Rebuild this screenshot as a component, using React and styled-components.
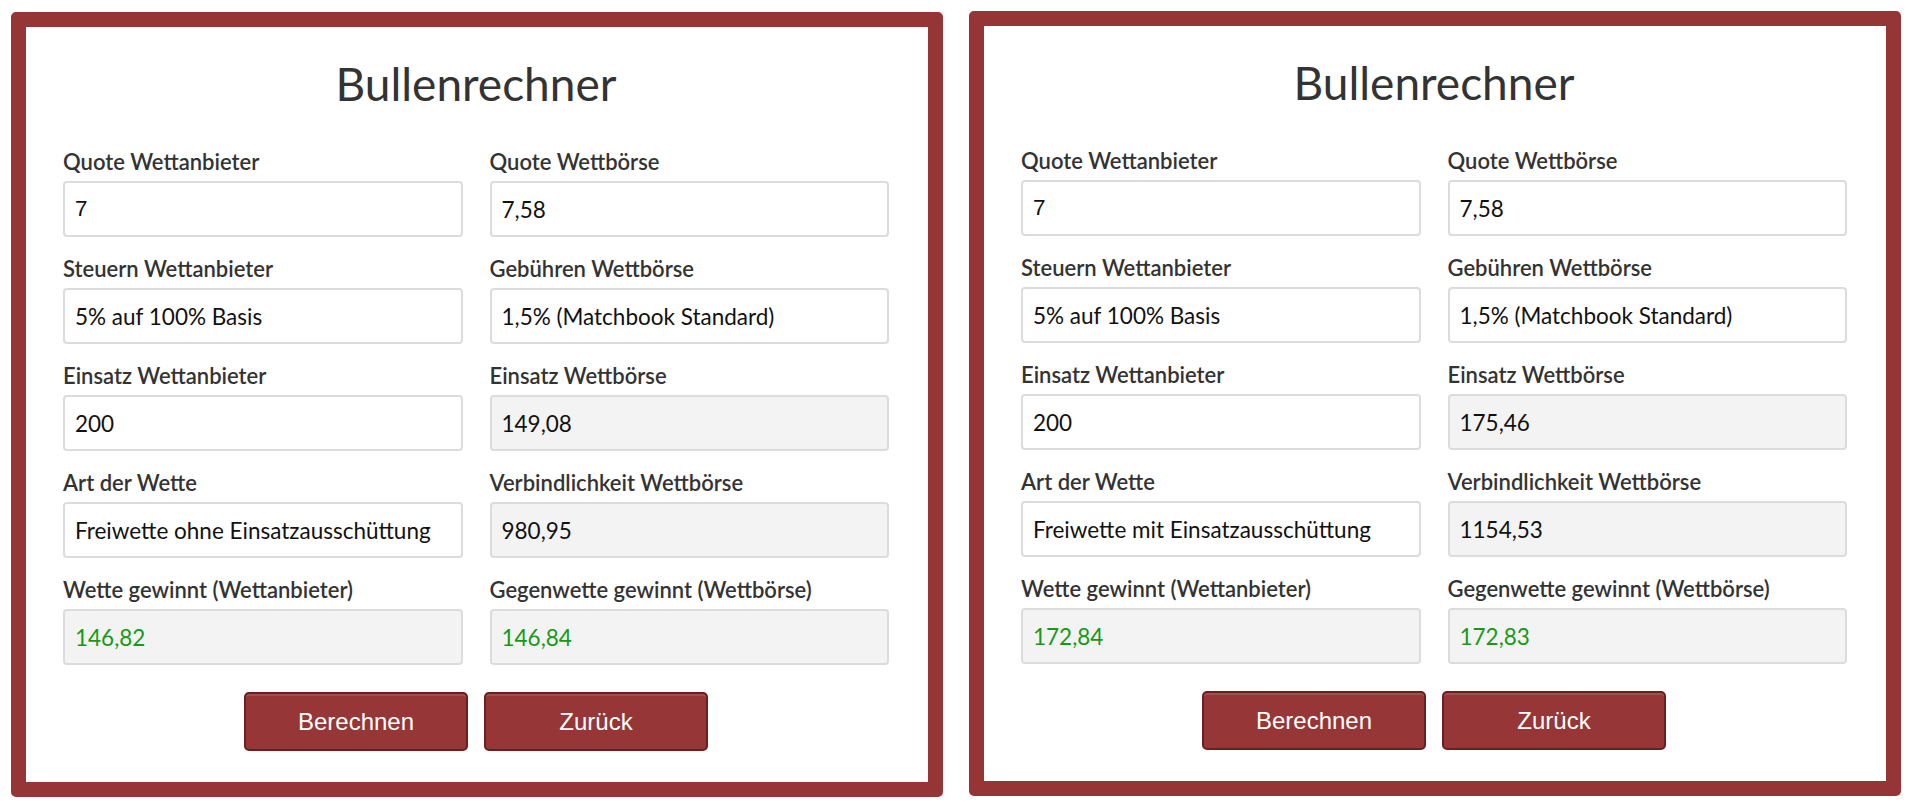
import React from 'react';
import styled, {createGlobalStyle} from 'styled-components';

const GlobalStyle = createGlobalStyle`
  html, body {
    margin: 0;
    padding: 0;
    background: #fff;
  }
  body {
    font-family: "Lato", "Noto Sans", sans-serif;
  }
`;

const Page = styled.div`
  display: flex;
  flex-direction: row;
  align-items: flex-start;
  gap: 26px;
  padding: 11px 13px 0 11px;
`;

const Card = styled.div`
  box-sizing: border-box;
  width: 932px;
  margin-top: ${p => p.$offset || 0}px;
  border: 15px solid #953535;
  border-radius: 5px;
  background: #fff;
  padding: 32px 39px 31px 37px;
  display: flex;
  flex-direction: column;
`;

const Title = styled.h1`
  margin: 0 0 38px 0;
  font-family: "Lato", sans-serif;
  font-weight: 400;
  font-size: 46px;
  line-height: 50px;
  color: #333;
  text-align: center;
`;

const FieldGrid = styled.div`
  display: grid;
  grid-template-columns: 1fr 1fr;
  column-gap: 27px;
  row-gap: 17px;
`;

const Field = styled.div`
  display: flex;
  flex-direction: column;
`;

const Label = styled.label`
  font-family: "Lato", sans-serif;
  font-weight: 600;
  font-size: 22px;
  line-height: 29px;
  color: #333;
  margin-bottom: 5px;
  white-space: nowrap;
`;

const Input = styled.div`
  box-sizing: border-box;
  height: 56px;
  display: flex;
  align-items: center;
  padding: 0 10px;
  border: 2px solid #dcdcdc;
  border-radius: 4px;
  background: ${p => (p.$readOnly ? '#f3f3f3' : '#fff')};
  color: ${p => (p.$result ? '#159a15' : '#111')};
  font-family: ${p => (p.$plain ? '"Liberation Sans", Arial, sans-serif' : '"Lato", sans-serif')};
  font-size: ${p => (p.$plain ? '22.5px' : '22.5px')};
  white-space: nowrap;
`;

const ButtonRow = styled.div`
  display: flex;
  justify-content: center;
  gap: 16px;
  margin-top: 27px;
`;

const Button = styled.button`
  box-sizing: border-box;
  width: 224px;
  height: 59px;
  background: #963636;
  color: #fff;
  border: 2px solid #6a2020;
  border-radius: 5px;
  box-shadow: inset 0 2px 0 rgba(255, 255, 255, 0.12);
  font-family: "Liberation Sans", Arial, sans-serif;
  font-size: 24px;
  cursor: pointer;
`;

const calculators = [
  {
    art: 'Freiwette ohne Einsatzausschüttung',
    einsatzBoerse: '149,08',
    verbindlichkeit: '980,95',
    gewinnAnbieter: '146,82',
    gewinnBoerse: '146,84',
    offset: 1,
  },
  {
    art: 'Freiwette mit Einsatzausschüttung',
    einsatzBoerse: '175,46',
    verbindlichkeit: '1154,53',
    gewinnAnbieter: '172,84',
    gewinnBoerse: '172,83',
    offset: 0,
  },
];

function Calculator({data}) {
  const fields = [
    {label: 'Quote Wettanbieter', value: '7', plain: true},
    {label: 'Quote Wettbörse', value: '7,58'},
    {label: 'Steuern Wettanbieter', value: '5% auf 100% Basis'},
    {label: 'Gebühren Wettbörse', value: '1,5% (Matchbook Standard)'},
    {label: 'Einsatz Wettanbieter', value: '200'},
    {label: 'Einsatz Wettbörse', value: data.einsatzBoerse, readOnly: true},
    {label: 'Art der Wette', value: data.art},
    {label: 'Verbindlichkeit Wettbörse', value: data.verbindlichkeit, readOnly: true},
    {label: 'Wette gewinnt (Wettanbieter)', value: data.gewinnAnbieter, readOnly: true, result: true},
    {label: 'Gegenwette gewinnt (Wettbörse)', value: data.gewinnBoerse, readOnly: true, result: true},
  ];

  return (
    <Card $offset={data.offset}>
      <Title>Bullenrechner</Title>
      <FieldGrid>
        {fields.map(f => (
          <Field key={f.label}>
            <Label>{f.label}</Label>
            <Input $readOnly={f.readOnly} $result={f.result} $plain={f.plain}>
              {f.value}
            </Input>
          </Field>
        ))}
      </FieldGrid>
      <ButtonRow>
        <Button>Berechnen</Button>
        <Button>Zurück</Button>
      </ButtonRow>
    </Card>
  );
}

export default function App() {
  return (
    <>
      <GlobalStyle />
      <Page>
        {calculators.map((c, i) => (
          <Calculator key={i} data={c} />
        ))}
      </Page>
    </>
  );
}
